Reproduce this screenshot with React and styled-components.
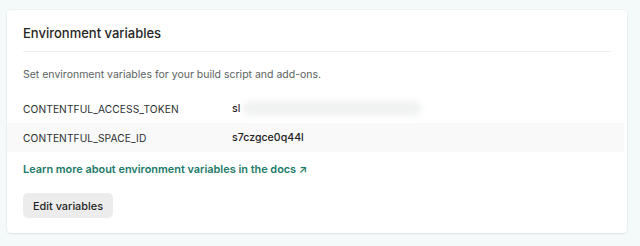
import React from 'react';
import styled, { createGlobalStyle } from 'styled-components';

const GlobalStyle = createGlobalStyle`
  body {
    margin: 0;
    background: #f4f9f9;
    font-family: Inter, "Noto Sans", sans-serif;
    -webkit-font-smoothing: antialiased;
  }
`

const Page = styled.div`
  padding: 10px 13px 13px 7px;
`

const Card = styled.section`
  background: #fff;
  border-radius: 4px;
  box-shadow: 0 1px 2px rgba(0, 0, 0, 0.08), 0 0 0 1px rgba(0, 0, 0, 0.02);
  padding: 0 0 15px;
`

const Header = styled.div`
  margin: 0 16px;
  padding: 12px 0 7px;
  border-bottom: 1px solid #eef0f0;
`

const Title = styled.h2`
  margin: 0;
  font-size: 13px;
  font-weight: 500;
  color: #1f2424;
  line-height: 22px;
`

const Desc = styled.p`
  margin: 15px 16px 11px;
  font-size: 10.5px;
  color: #5c6262;
  line-height: 16px;
`

const Rows = styled.div`
  display: flex;
  flex-direction: column;
`

const Row = styled.div`
  display: grid;
  grid-template-columns: 209px 1fr;
  align-items: center;
  height: 29px;
  padding: 0 16px;
  margin-right: 3px;
  background: ${props => props.shade ? '#f9f9f9' : 'transparent'};
  font-size: 10.2px;
  color: #2b3030;
`

const Key = styled.span`
  letter-spacing: 0.1px;
`

const Value = styled.span`
  display: flex;
  align-items: center;
  font-weight: 500;
  font-size: 10.6px;
  color: #1f2424;
`

const Blur = styled.span`
  display: inline-block;
  width: 180px;
  height: 15px;
  margin-left: 2px;
  border-radius: 8px;
  background: #f1f2f2;
  filter: blur(3px);
`

const DocsLink = styled.a`
  display: inline-block;
  margin: 9px 16px 0;
  font-size: 10.9px;
  font-weight: 600;
  color: #1b7a68;
  text-decoration: none;
  line-height: 16px;
`

const Button = styled.button`
  display: block;
  margin: 16px 16px 0;
  padding: 0 10px;
  height: 25px;
  border: 0;
  border-radius: 5px;
  background: #ececed;
  font-family: inherit;
  font-size: 10.9px;
  font-weight: 500;
  color: #1f2424;
`

const vars = [
  { key: 'CONTENTFUL_ACCESS_TOKEN', value: 'sl', hidden: true },
  { key: 'CONTENTFUL_SPACE_ID', value: 's7czgce0q44l' },
];

const App = () => {
  return (
    <Page>
      <GlobalStyle />
      <Card>
        <Header>
          <Title>Environment variables</Title>
        </Header>
        <Desc>Set environment variables for your build script and add-ons.</Desc>
        <Rows>
          {vars.map((v, i) => (
            <Row key={v.key} shade={i % 2 === 1}>
              <Key>{v.key}</Key>
              <Value>
                {v.value}
                {v.hidden && <Blur />}
              </Value>
            </Row>
          ))}
        </Rows>
        <DocsLink href="#">Learn more about environment variables in the docs ↗</DocsLink>
        <Button>Edit variables</Button>
      </Card>
    </Page>
  )
}

export default App
